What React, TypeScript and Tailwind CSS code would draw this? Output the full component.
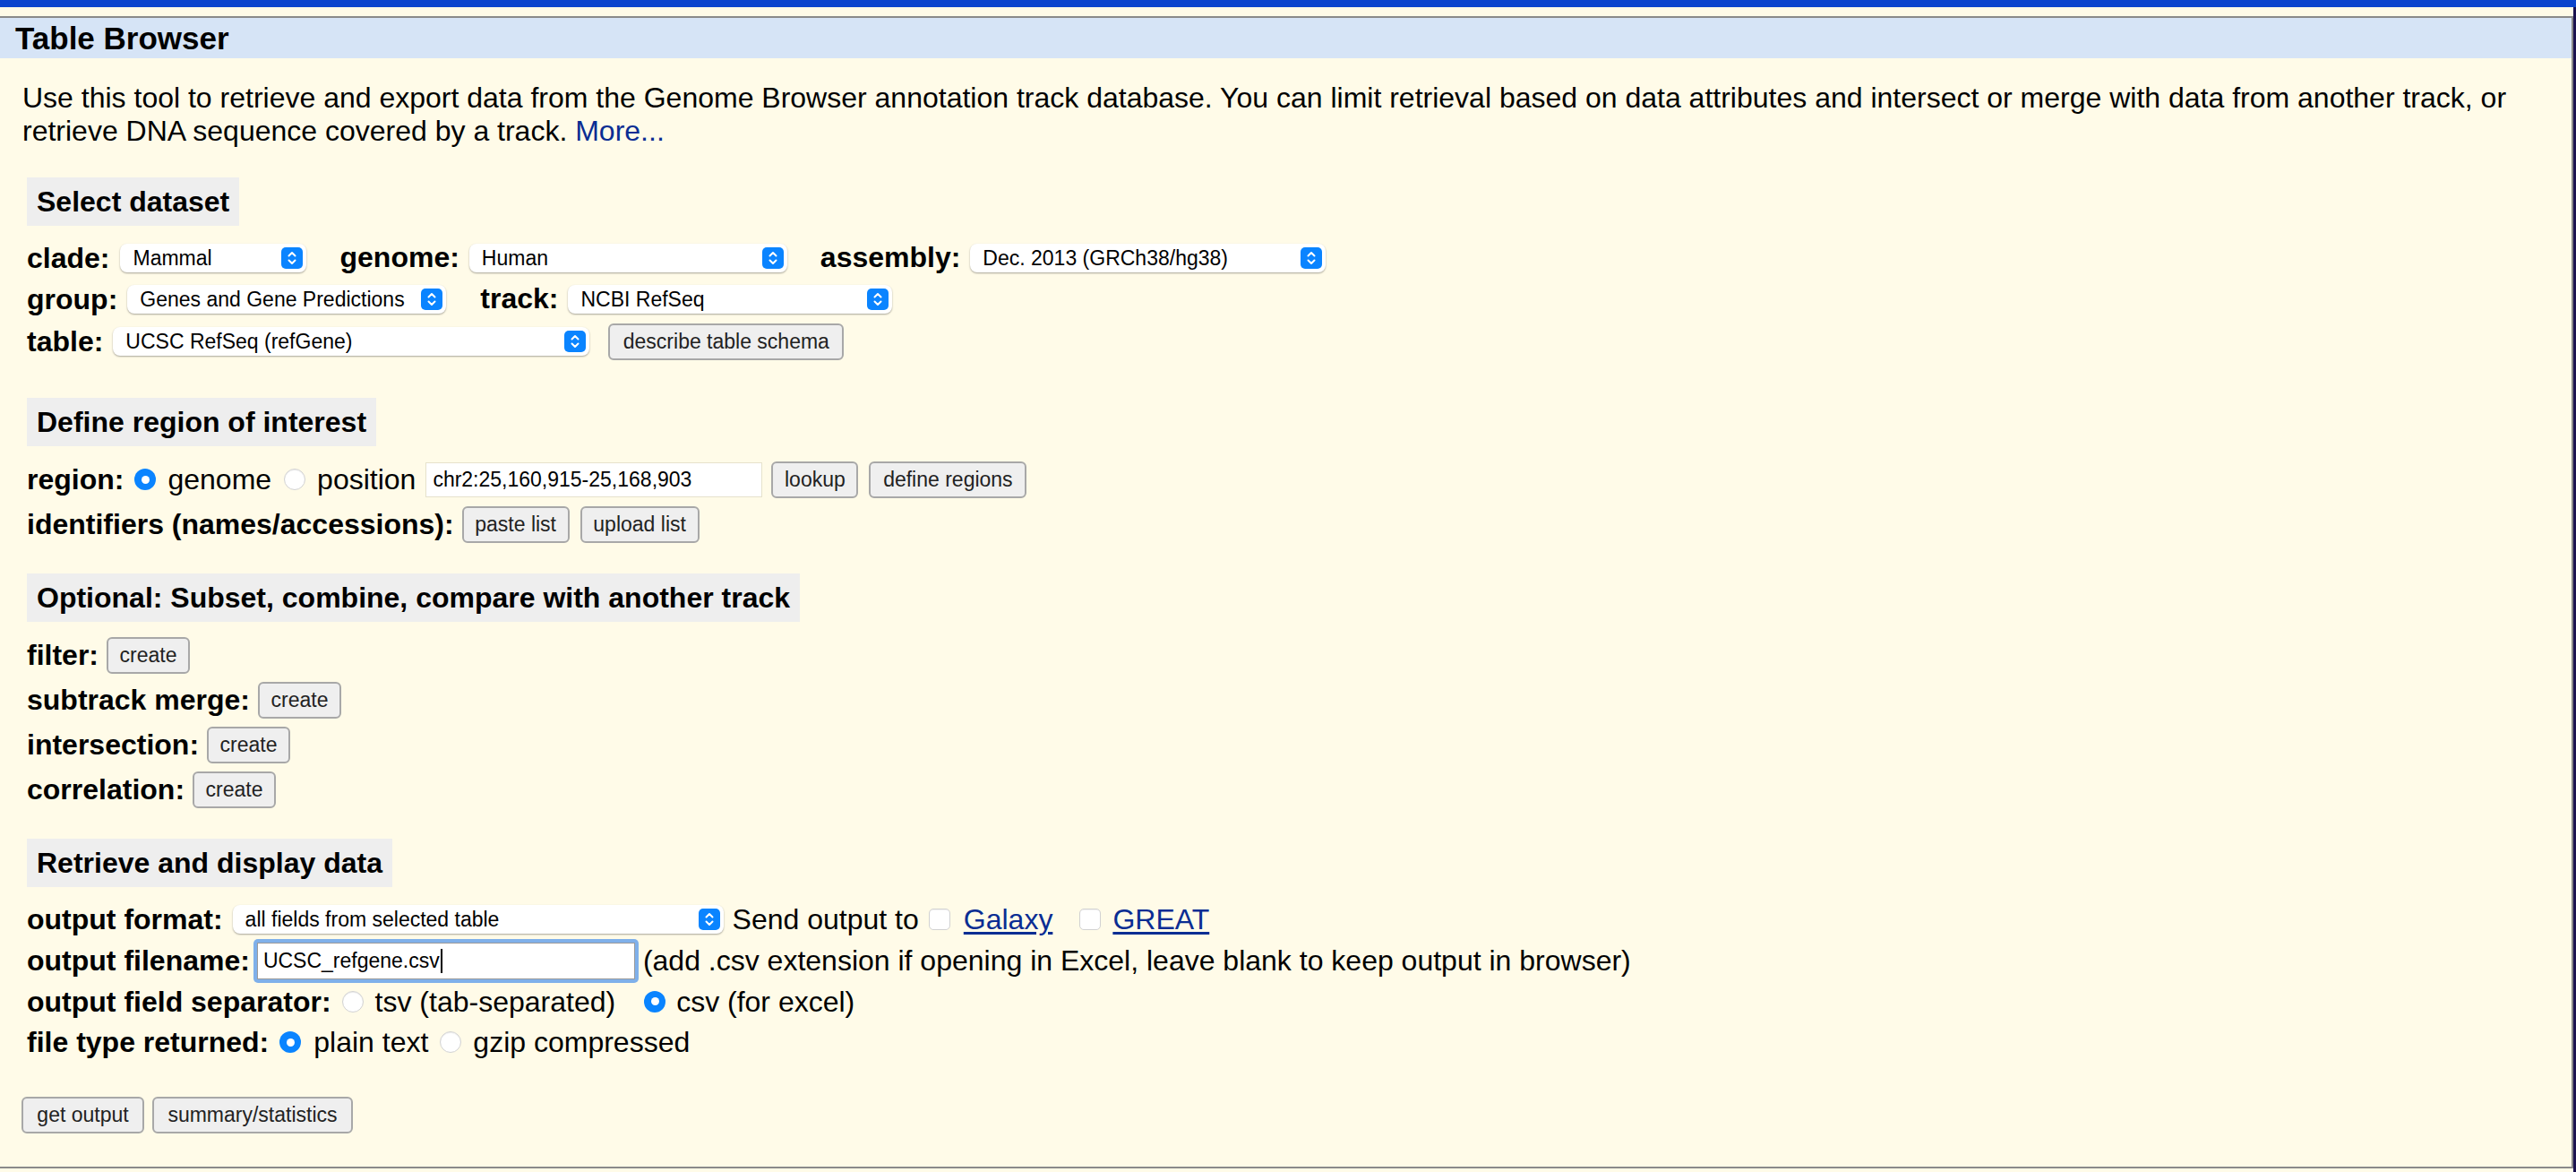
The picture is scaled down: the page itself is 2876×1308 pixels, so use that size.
import React from 'react';
import clsx from 'clsx';

// UCSC Table Browser form (static rendering)

const Chevrons = () => (
  <svg width="14" height="18" viewBox="0 0 14 18" fill="none" stroke="white" strokeWidth="2" strokeLinecap="round" strokeLinejoin="round">
    <path d="M3.5 6.5 L7 3 L10.5 6.5" />
    <path d="M3.5 11.5 L7 15 L10.5 11.5" />
  </svg>
);

const Select: React.FC<{ className?: string; children: React.ReactNode }> = ({ className, children }) => (
  <div className={clsx('flex h-[32px] shrink-0 items-center rounded-[8px] bg-white pl-[14px] text-[23px] text-black shadow-[0_1px_2px_rgba(0,0,0,0.35)]', className)}>
    <span className="flex-1 truncate">{children}</span>
    <span className="mr-[4px] flex h-[24px] w-[24px] items-center justify-center rounded-[5px] bg-[#0a84ff]">
      <Chevrons />
    </span>
  </div>
);

const Btn: React.FC<{ className?: string; children: React.ReactNode }> = ({ className, children }) => (
  <div className={clsx('flex h-[41px] shrink-0 items-center justify-center rounded-[6px] border-2 border-[#a8a8a8] bg-[#efefef] text-[23px] text-[#222]', className)}>
    {children}
  </div>
);

const Radio: React.FC<{ checked?: boolean; className?: string }> = ({ checked, className }) =>
  checked ? (
    <span className={clsx('flex h-[24px] w-[24px] shrink-0 items-center justify-center rounded-full bg-[#0a84ff]', className)}>
      <span className="h-[9px] w-[9px] rounded-full bg-white" />
    </span>
  ) : (
    <span className={clsx('h-[24px] w-[24px] shrink-0 rounded-full border border-[#d2d2d2] bg-white shadow-[inset_0_1px_1px_rgba(0,0,0,0.08)]', className)} />
  );

const Check: React.FC<{ className?: string }> = ({ className }) => (
  <span className={clsx('h-[24px] w-[24px] shrink-0 rounded-[5px] border border-[#d2d2d2] bg-white shadow-[inset_0_1px_1px_rgba(0,0,0,0.06)]', className)} />
);

const Label: React.FC<{ children: React.ReactNode }> = ({ children }) => (
  <span className="whitespace-nowrap text-[32px] font-bold leading-none">{children}</span>
);

const Text: React.FC<{ className?: string; children: React.ReactNode }> = ({ className, children }) => (
  <span className={clsx('whitespace-nowrap text-[32px] leading-none', className)}>{children}</span>
);

const SectionTitle: React.FC<{ children: React.ReactNode }> = ({ children }) => (
  <div className="inline-flex h-[54px] items-center bg-[#eeeeee] px-[11px] text-[32px] font-bold leading-none">{children}</div>
);

export default function App() {
  return (
    <div className="min-h-[1308px] bg-[#fffbe8] font-['Liberation_Sans',Arial,sans-serif] text-black">
      <div className="h-[8px] bg-[#0b45cd]" />
      <div className="flex">
        <div className="flex-1 pb-[4px] pt-[10px]">
          <div className="border-b-2 border-r-2 border-t-2 border-[#8a8a8a]">
            <div className="h-[45px] bg-[#d6e4f6] px-[17px] text-[35px] font-bold leading-[45px]">Table Browser</div>

            <div className="pb-[37px] pl-[30px] pr-[24px] pt-[26px]">
              <p className="-ml-[5px] text-[32px] leading-[37px]">
                Use this tool to retrieve and export data from the Genome Browser annotation track database. You can limit retrieval based on data attributes and intersect or merge with data from another track, or retrieve DNA sequence covered by a track.{' '}
                <a className="text-[#0a2d93]">More...</a>
              </p>

              {/* Select dataset */}
              <div className="mt-[33px]">
                <SectionTitle>Select dataset</SectionTitle>
              </div>
              <div className="mt-[13px]">
                <div className="flex h-[46px] items-center">
                  <Label>clade:</Label>
                  <Select className="ml-[12px] w-[208px]">Mammal</Select>
                  <span className="ml-[37px]"><Label>genome:</Label></span>
                  <Select className="ml-[11px] w-[355px]">Human</Select>
                  <span className="ml-[37px]"><Label>assembly:</Label></span>
                  <Select className="ml-[11px] w-[397px]">Dec. 2013 (GRCh38/hg38)</Select>
                </div>
                <div className="flex h-[46px] items-center">
                  <Label>group:</Label>
                  <Select className="ml-[11px] w-[356px]">Genes and Gene Predictions</Select>
                  <span className="ml-[38px]"><Label>track:</Label></span>
                  <Select className="ml-[11px] w-[362px]">NCBI RefSeq</Select>
                </div>
                <div className="flex h-[48px] items-center">
                  <Label>table:</Label>
                  <Select className="ml-[11px] w-[532px]">UCSC RefSeq (refGene)</Select>
                  <Btn className="ml-[21px] w-[263px]">describe table schema</Btn>
                </div>
              </div>

              {/* Define region */}
              <div className="mt-[39px]">
                <SectionTitle>Define region of interest</SectionTitle>
              </div>
              <div className="mt-[12px]">
                <div className="flex h-[50px] items-center">
                  <Label>region:</Label>
                  <Radio checked className="ml-[12px]" />
                  <Text className="ml-[13px]">genome</Text>
                  <Radio className="ml-[14px]" />
                  <Text className="ml-[13px]">position</Text>
                  <div className="ml-[11px] flex h-[39px] w-[376px] items-center border border-[#e6e2cc] bg-white pl-[7px] text-[23px]">chr2:25,160,915-25,168,903</div>
                  <Btn className="ml-[10px] w-[97px]">lookup</Btn>
                  <Btn className="ml-[12px] w-[176px]">define regions</Btn>
                </div>
                <div className="flex h-[50px] items-center">
                  <Label>identifiers (names/accessions):</Label>
                  <Btn className="ml-[9px] w-[120px]">paste list</Btn>
                  <Btn className="ml-[12px] w-[133px]">upload list</Btn>
                </div>
              </div>

              {/* Optional */}
              <div className="mt-[30px]">
                <SectionTitle>Optional: Subset, combine, compare with another track</SectionTitle>
              </div>
              <div className="mt-[12px]">
                <div className="flex h-[50px] items-center">
                  <Label>filter:</Label>
                  <Btn className="ml-[9px] w-[93px]">create</Btn>
                </div>
                <div className="flex h-[50px] items-center">
                  <Label>subtrack merge:</Label>
                  <Btn className="ml-[9px] w-[93px]">create</Btn>
                </div>
                <div className="flex h-[50px] items-center">
                  <Label>intersection:</Label>
                  <Btn className="ml-[9px] w-[93px]">create</Btn>
                </div>
                <div className="flex h-[50px] items-center">
                  <Label>correlation:</Label>
                  <Btn className="ml-[9px] w-[93px]">create</Btn>
                </div>
              </div>

              {/* Retrieve */}
              <div className="mt-[30px]">
                <SectionTitle>Retrieve and display data</SectionTitle>
              </div>
              <div className="mt-[13px]">
                <div className="flex h-[46px] items-center">
                  <Label>output format:</Label>
                  <Select className="ml-[11px] w-[548px]">all fields from selected table</Select>
                  <Text className="ml-[10px]">Send output to</Text>
                  <Check className="ml-[11px]" />
                  <a className="ml-[15px] whitespace-nowrap text-[32px] leading-none text-[#0a2d93] underline underline-offset-[3px]">Galaxy</a>
                  <Check className="ml-[30px]" />
                  <a className="ml-[13px] whitespace-nowrap text-[32px] leading-none text-[#0a2d93] underline underline-offset-[3px]">GREAT</a>
                </div>
                <div className="flex h-[46px] items-center">
                  <Label>output filename:</Label>
                  <div className="ml-[4px] h-[49px] w-[430px] shrink-0 rounded-[5px] bg-[#7fb0ea] p-[4px]">
                    <div className="flex h-full items-center border border-[#9a9a9a] bg-white pl-[6px] text-[23px]">
                      UCSC_refgene.csv<span className="ml-[1px] h-[27px] w-[2px] bg-black" />
                    </div>
                  </div>
                  <Text className="ml-[5px]">(add .csv extension if opening in Excel, leave blank to keep output in browser)</Text>
                </div>
                <div className="flex h-[45px] items-center">
                  <Label>output field separator:</Label>
                  <Radio className="ml-[12px]" />
                  <Text className="ml-[13px]">tsv (tab-separated)</Text>
                  <Radio checked className="ml-[32px]" />
                  <Text className="ml-[12px]">csv (for excel)</Text>
                </div>
                <div className="flex h-[46px] items-center">
                  <Label>file type returned:</Label>
                  <Radio checked className="ml-[12px]" />
                  <Text className="ml-[14px]">plain text</Text>
                  <Radio className="ml-[13px]" />
                  <Text className="ml-[13px]">gzip compressed</Text>
                </div>
              </div>

              <div className="-ml-[6px] mt-[38px] flex">
                <Btn className="w-[137px]">get output</Btn>
                <Btn className="ml-[9px] w-[224px]">summary/statistics</Btn>
              </div>
            </div>
          </div>
        </div>
        <div className="w-[3px] bg-[#1b1350]" />
      </div>
    </div>
  );
}
